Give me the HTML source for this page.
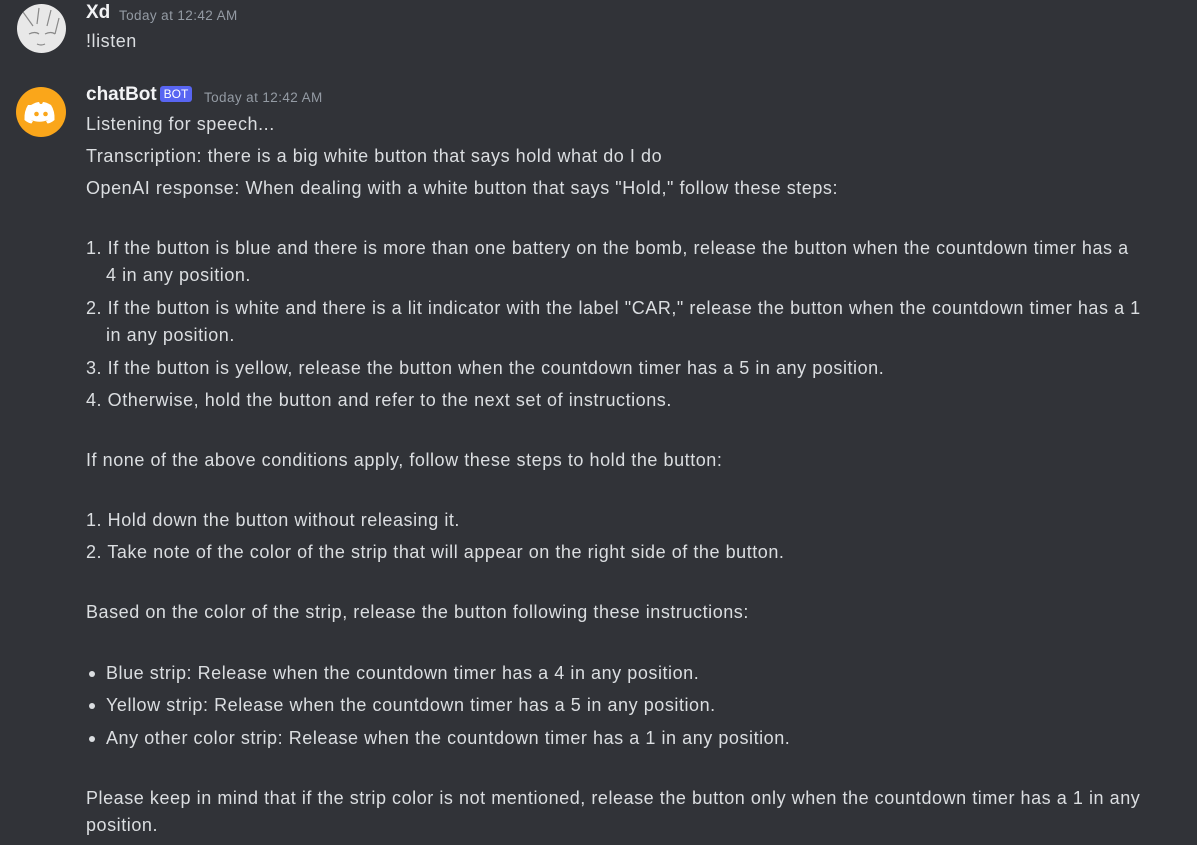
<!DOCTYPE html>
<html><head><meta charset="utf-8"><style>
html,body{margin:0;padding:0;background:#313338;width:1197px;height:845px;overflow:hidden;font-family:"Liberation Sans",sans-serif;}
.l{position:absolute;left:86px;color:#dbdee1;font-size:18px;white-space:nowrap;line-height:22px;letter-spacing:0.55px}
.name{position:absolute;color:#f2f3f5;font-size:19px;font-weight:bold;line-height:24px}
.ts{position:absolute;color:#949ba4;font-size:13.5px;line-height:16px;letter-spacing:0.4px}
.dot{position:absolute;left:89px;width:6px;height:6px;border-radius:50%;background:#dbdee1}
</style></head><body>
<div style="position:absolute;left:17px;top:4px;width:49px;height:49px;border-radius:50%;background:#e8e8e8;overflow:hidden">
<svg width="49" height="49"><path d="M6 8 L16 22 M22 4 L20 20 M34 6 L30 22 M42 14 L38 30 M12 30 q6-3 10 0 M28 30 q6-3 10 0 M20 40 q4 2 8 0" stroke="#888" stroke-width="1.2" fill="none"/></svg></div>
<div class="name" style="left:86px;top:1px">Xd</div>
<div class="ts" style="left:119px;top:8px">Today at 12:42 AM</div>
<div class="l" style="top:30px">!listen</div>

<div style="position:absolute;left:16px;top:87px;width:50px;height:50px;border-radius:50%;background:#faa61a">
<svg width="50" height="50" viewBox="0 0 50 50"><path d="M15 18 q5-3 8-3 l1 2 q1-.3 2 0 l1-2 q3 0 8 3 q4 6 3.5 15 q-3.5 3-7 3.5 l-1.5-2.5 q1.5-.6 2.5-1.3 q-9 4-18 0 q1 .7 2.5 1.3 L15.5 36.5 q-3.5-.5-7-3.5 q-.5-9 3.5-15z" fill="#fff"/><circle cx="20.5" cy="27" r="2.3" fill="#faa61a"/><circle cx="29.5" cy="27" r="2.3" fill="#faa61a"/></svg></div>
<div class="name" style="left:86px;top:83px">chatBot</div>
<div style="position:absolute;left:160px;top:86px;width:32px;height:16px;background:#5865f2;border-radius:3px;color:#fff;font-size:12px;line-height:16px;text-align:center">BOT</div>
<div class="ts" style="left:204px;top:90px">Today at 12:42 AM</div>

<div class="l" style="top:113px">Listening for speech...</div>
<div class="l" style="top:145px">Transcription: there is a big white button that says hold what do I do</div>
<div class="l" style="top:177px">OpenAI response: When dealing with a white button that says "Hold," follow these steps:</div>
<div class="l" style="top:237px">1. If the button is blue and there is more than one battery on the bomb, release the button when the countdown timer has a</div>
<div class="l" style="top:264px;left:106px">4 in any position.</div>
<div class="l" style="top:297px">2. If the button is white and there is a lit indicator with the label "CAR," release the button when the countdown timer has a 1</div>
<div class="l" style="top:324px;left:106px">in any position.</div>
<div class="l" style="top:357px">3. If the button is yellow, release the button when the countdown timer has a 5 in any position.</div>
<div class="l" style="top:389px">4. Otherwise, hold the button and refer to the next set of instructions.</div>
<div class="l" style="top:449px">If none of the above conditions apply, follow these steps to hold the button:</div>
<div class="l" style="top:509px">1. Hold down the button without releasing it.</div>
<div class="l" style="top:541px">2. Take note of the color of the strip that will appear on the right side of the button.</div>
<div class="l" style="top:601px">Based on the color of the strip, release the button following these instructions:</div>
<div class="dot" style="top:671px"></div><div class="l" style="top:662px;left:106px">Blue strip: Release when the countdown timer has a 4 in any position.</div>
<div class="dot" style="top:703px"></div><div class="l" style="top:694px;left:106px">Yellow strip: Release when the countdown timer has a 5 in any position.</div>
<div class="dot" style="top:736px"></div><div class="l" style="top:727px;left:106px">Any other color strip: Release when the countdown timer has a 1 in any position.</div>
<div class="l" style="top:787px">Please keep in mind that if the strip color is not mentioned, release the button only when the countdown timer has a 1 in any</div>
<div class="l" style="top:814px">position.</div>
</body></html>
